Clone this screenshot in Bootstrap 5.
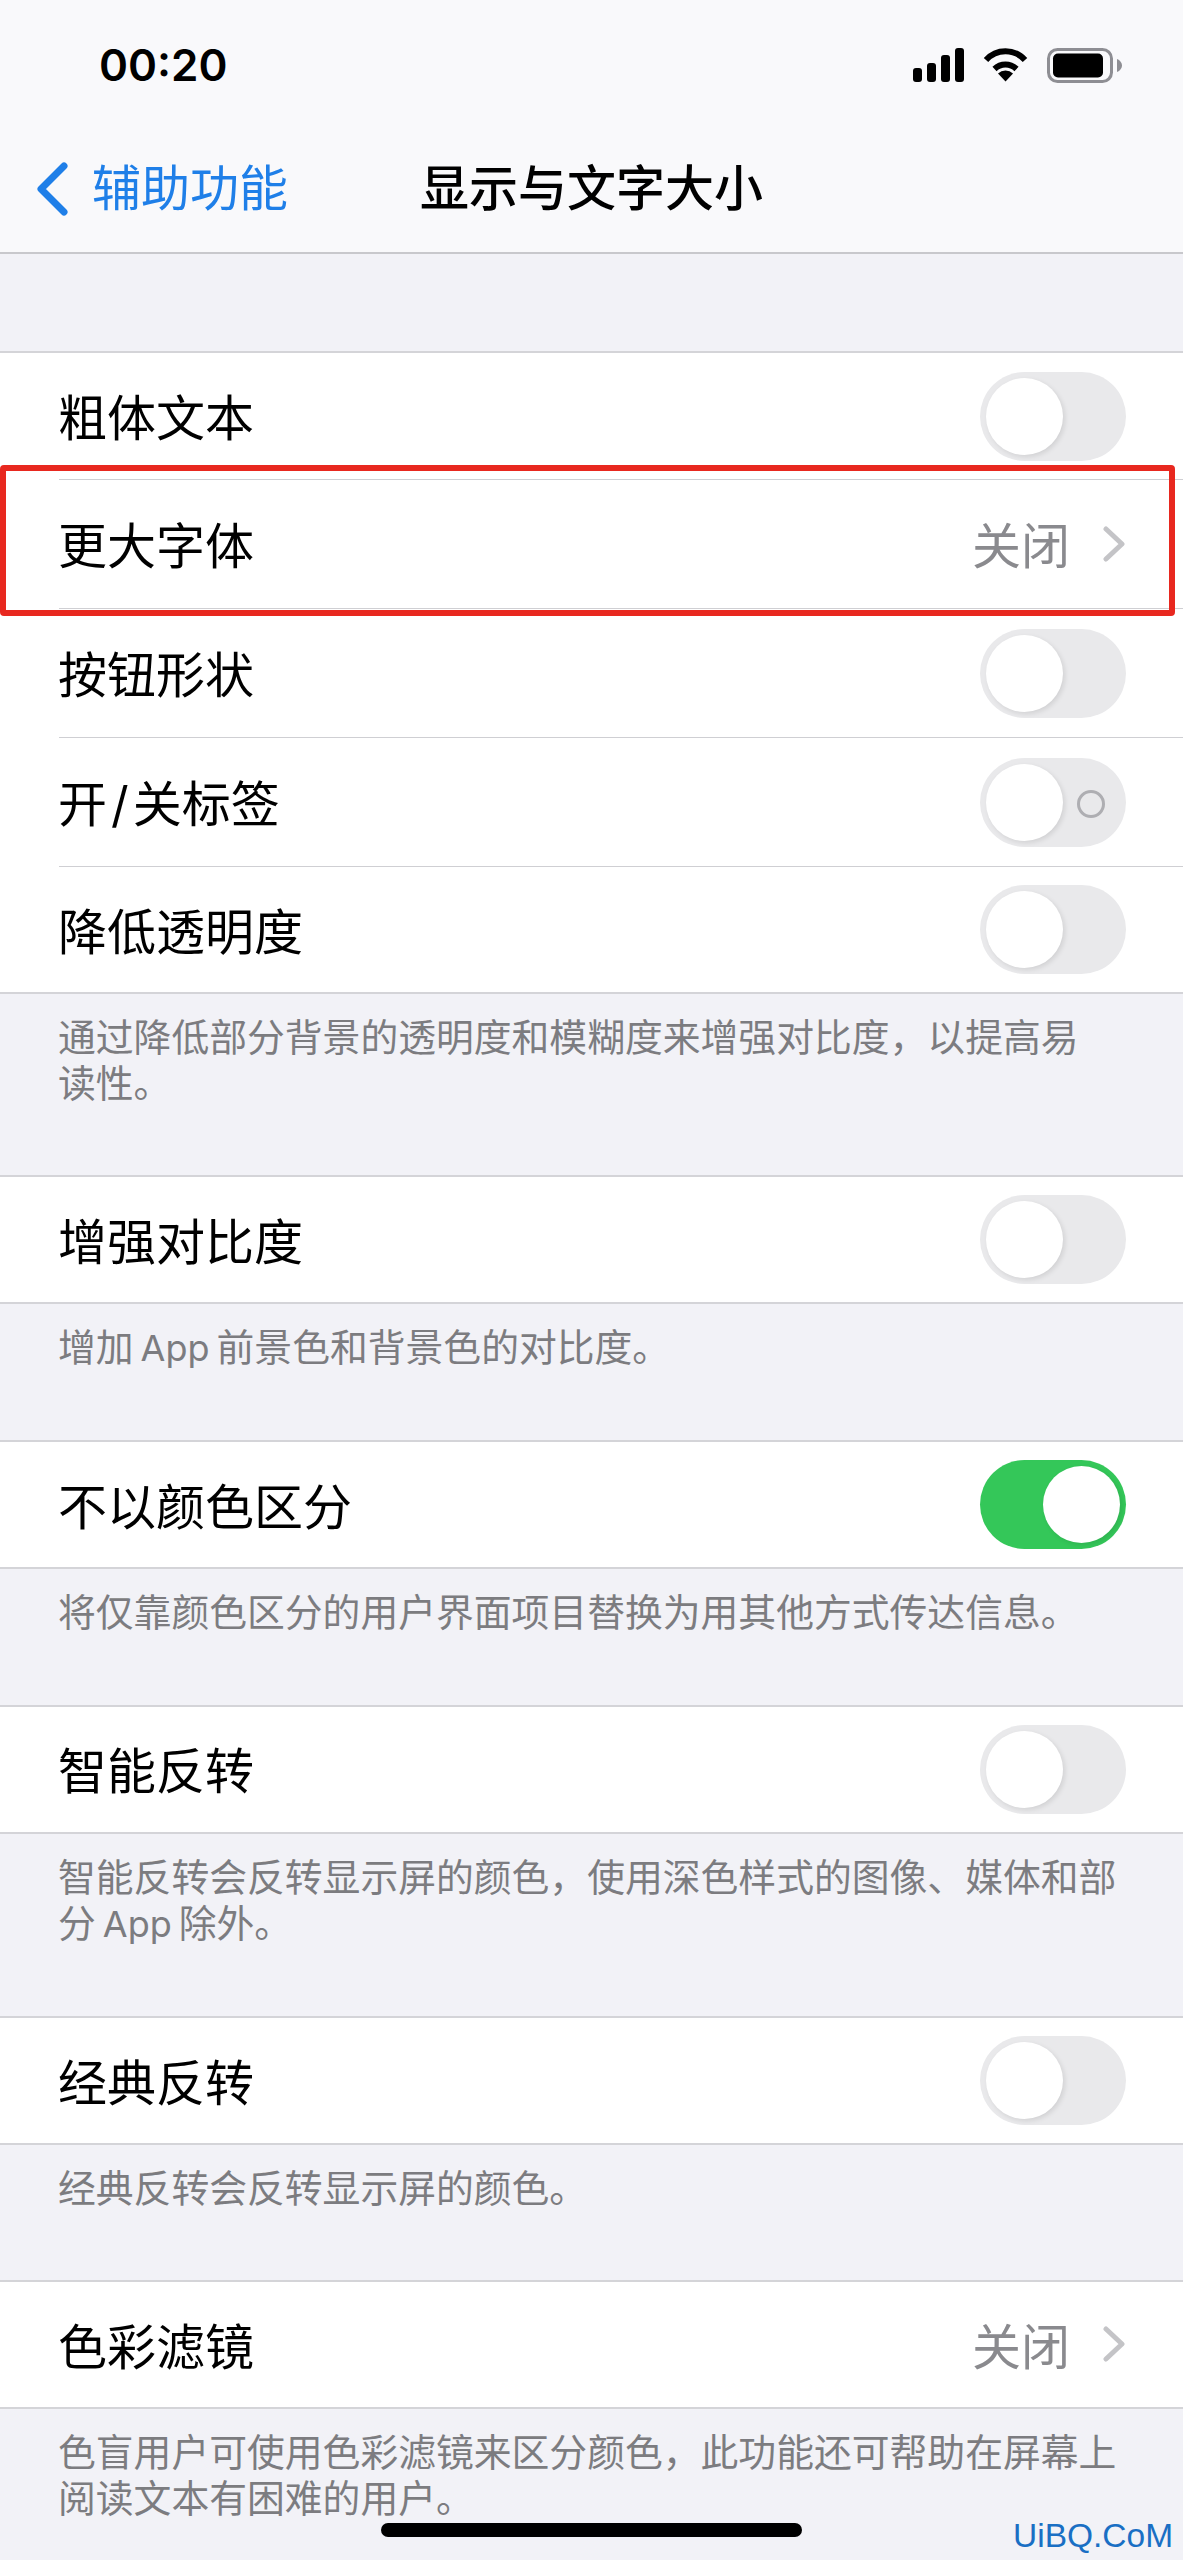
<!DOCTYPE html>
<html lang="zh-CN">
<head>
    <meta charset="UTF-8">
    <meta name="viewport" content="width=device-width, initial-scale=1.0">
    <title>显示与文字大小</title>
    <link href="https://cdn.jsdelivr.net/npm/bootstrap@5.3.2/dist/css/bootstrap.min.css" rel="stylesheet">
    <style>
        html, body { height: 2560px; overflow: hidden; }
        body {
            background-color: #f2f2f7;
            color: #000;
            font-family: "Inter", "Noto Sans CJK SC", sans-serif;
        }
        .screen { height: 2560px; overflow: hidden; }
        .top-head {
            background-color: #f9f9fb;
            border-bottom: 2px solid #c8c8cc;
            height: 254px;
        }
        .status-row { height: 130px; padding: 0 61px 0 99px; }
        .status-time { font-size: 44px; font-weight: 600; line-height: 1; letter-spacing: 0; }
        .status-icons { gap: 19px; }
        .nav-row {
            display: grid;
            grid-template-columns: 1fr auto 1fr;
            height: 118px;
            padding: 0;
            width: 100%;
        }
        .back-link { color: #1f7fe8; font-size: 49px; gap: 24px; margin-left: 36px; text-decoration: none; }
        .nav-title { font-size: 49px; font-weight: 500; }
        .cell-group {
            background-color: #fff;
            border-top: 2px solid #d4d4d8;
            border-bottom: 2px solid #d4d4d8;
            border-radius: 0;
        }
        .cell-row {
            background: transparent;
            border: 0;
            border-bottom: 2px solid #cfcfd3;
            color: #000;
            font-size: 49px;
            height: 129px;
            margin-left: 59px;
            padding: 0 57px 0 0;
        }
        .cell-row > span:first-child { margin-left: -1px; margin-top: 6px; }
        .cell-group .cell-row:first-child:not(:last-child) { height: 127px; }
        .cell-group .cell-row:last-child { border-bottom: 0; height: 125px; }
        .cell-value { color: #8a8a8e; gap: 33px; padding-right: 1px; }
        .cell-value > span { margin-top: 6px; }
        .slash-mark { margin: 0 4px; }
        .switch-off, .switch-on {
            border-radius: 45px;
            height: 89px;
            width: 146px;
        }
        .switch-off { background-color: #e9e9eb; }
        .switch-on { background-color: #34c759; }
        .switch-knob {
            background-color: #fff;
            border-radius: 50%;
            box-shadow: 2px 2px 5px rgba(0, 0, 0, .10);
            height: 77px;
            left: 6px;
            top: 6px;
            width: 77px;
        }
        .switch-on .switch-knob { left: 63px; }
        .switch-ring {
            border: 3px solid #aeaeb2;
            border-radius: 50%;
            height: 28px;
            left: 97px;
            top: 32px;
            width: 28px;
        }
        .cell-note {
            color: #7c7c80;
            font-size: 37.8px;
            line-height: 46px;
            padding: 20px 40px 69.2px 58px;
        }
        .latin-word { font-size: 36px; margin: 0 7px; }
        .first-gap { height: 97px; }
        .red-frame {
            border: 6px solid #e8281f;
            border-radius: 4px;
            bottom: -8px;
            left: -59px;
            right: 8px;
            top: -15px;
        }
        .home-bar {
            background-color: #000;
            border-radius: 7px;
            height: 14px;
            left: 381px;
            top: 2523px;
            width: 421px;
        }
        .site-mark {
            color: #1a6fc4;
            font-family: "Liberation Sans", sans-serif;
            font-size: 33.5px;
            left: 1013px;
            line-height: 1;
            top: 2519px;
        }
    </style>
</head>
<body>
    <div class="screen position-relative">
        <header class="top-head">
            <div class="status-row d-flex justify-content-between align-items-center">
                <span class="status-time">00:20</span>
                <div class="status-icons d-flex align-items-center">
                    <svg width="51" height="34" viewBox="0 0 51 34">
                        <rect x="0" y="20" width="9" height="14" rx="3"/>
                        <rect x="14" y="15" width="9" height="19" rx="3"/>
                        <rect x="28" y="7" width="9" height="27" rx="3"/>
                        <rect x="42" y="0" width="9" height="34" rx="3"/>
                    </svg>
                    <svg width="45" height="34" viewBox="0 0 45 34">
                        <path d="M3 12A26 26 0 0 1 42 12" fill="none" stroke="#000" stroke-width="6"/>
                        <path d="M11.5 21A16 16 0 0 1 33.5 21" fill="none" stroke="#000" stroke-width="6"/>
                        <path d="M22.5 33.5L15 25.5A11 11 0 0 1 30 25.5Z"/>
                    </svg>
                    <svg width="75" height="35" viewBox="0 0 75 35">
                        <rect x="1.5" y="1.5" width="63" height="32" rx="9" fill="none" stroke="#8e8e93" stroke-width="3"/>
                        <rect x="6" y="5.5" width="50" height="24" rx="5"/>
                        <path d="M70 11C73 12 75 15 75 17.500C75 20 73 23 70 24Z" fill="#8e8e93"/>
                    </svg>
                </div>
            </div>
            <nav class="navbar nav-row align-items-center">
                <a class="back-link d-flex align-items-center" href="#">
                    <svg width="32" height="54" viewBox="0 0 32 54">
                        <path d="M28 4L5 27L28 50" fill="none" stroke="#1f7fe8" stroke-width="7" stroke-linecap="round" stroke-linejoin="round"/>
                    </svg>
                    <span>辅助功能</span>
                </a>
                <div class="nav-title">显示与文字大小</div>
                <div></div>
            </nav>
        </header>

        <div class="first-gap"></div>

        <ul class="list-group list-group-flush cell-group">
            <li class="list-group-item cell-row d-flex justify-content-between align-items-center">
                <span>粗体文本</span>
                <span class="switch-off position-relative d-block"><span class="switch-knob position-absolute"></span></span>
            </li>
            <li class="list-group-item cell-row d-flex justify-content-between align-items-center position-relative">
                <span>更大字体</span>
                <span class="cell-value d-flex align-items-center">
                    <span>关闭</span>
                    <svg width="22" height="36" viewBox="0 0 22 36"><path d="M3 3L19 18L3 33" fill="none" stroke="#c4c4c7" stroke-width="5" stroke-linecap="round" stroke-linejoin="round"/></svg>
                </span>
                <span class="red-frame position-absolute"></span>
            </li>
            <li class="list-group-item cell-row d-flex justify-content-between align-items-center">
                <span>按钮形状</span>
                <span class="switch-off position-relative d-block"><span class="switch-knob position-absolute"></span></span>
            </li>
            <li class="list-group-item cell-row d-flex justify-content-between align-items-center">
                <span>开<span class="slash-mark">/</span>关标签</span>
                <span class="switch-off position-relative d-block"><span class="switch-knob position-absolute"></span><span class="switch-ring position-absolute"></span></span>
            </li>
            <li class="list-group-item cell-row d-flex justify-content-between align-items-center">
                <span>降低透明度</span>
                <span class="switch-off position-relative d-block"><span class="switch-knob position-absolute"></span></span>
            </li>
        </ul>
        <p class="cell-note m-0">通过降低部分背景的透明度和模糊度来增强对比度，以提高易<br>读性。</p>

        <ul class="list-group list-group-flush cell-group">
            <li class="list-group-item cell-row d-flex justify-content-between align-items-center">
                <span>增强对比度</span>
                <span class="switch-off position-relative d-block"><span class="switch-knob position-absolute"></span></span>
            </li>
        </ul>
        <p class="cell-note m-0">增加<span class="latin-word">App</span>前景色和背景色的对比度。</p>

        <ul class="list-group list-group-flush cell-group">
            <li class="list-group-item cell-row d-flex justify-content-between align-items-center">
                <span>不以颜色区分</span>
                <span class="switch-on position-relative d-block"><span class="switch-knob position-absolute"></span></span>
            </li>
        </ul>
        <p class="cell-note m-0">将仅靠颜色区分的用户界面项目替换为用其他方式传达信息。</p>

        <ul class="list-group list-group-flush cell-group">
            <li class="list-group-item cell-row d-flex justify-content-between align-items-center">
                <span>智能反转</span>
                <span class="switch-off position-relative d-block"><span class="switch-knob position-absolute"></span></span>
            </li>
        </ul>
        <p class="cell-note m-0">智能反转会反转显示屏的颜色，使用深色样式的图像、媒体和部<br>分<span class="latin-word">App</span>除外。</p>

        <ul class="list-group list-group-flush cell-group">
            <li class="list-group-item cell-row d-flex justify-content-between align-items-center">
                <span>经典反转</span>
                <span class="switch-off position-relative d-block"><span class="switch-knob position-absolute"></span></span>
            </li>
        </ul>
        <p class="cell-note m-0">经典反转会反转显示屏的颜色。</p>

        <ul class="list-group list-group-flush cell-group">
            <li class="list-group-item cell-row d-flex justify-content-between align-items-center">
                <span>色彩滤镜</span>
                <span class="cell-value d-flex align-items-center">
                    <span>关闭</span>
                    <svg width="22" height="36" viewBox="0 0 22 36"><path d="M3 3L19 18L3 33" fill="none" stroke="#c4c4c7" stroke-width="5" stroke-linecap="round" stroke-linejoin="round"/></svg>
                </span>
            </li>
        </ul>
        <p class="cell-note m-0">色盲用户可使用色彩滤镜来区分颜色，此功能还可帮助在屏幕上<br>阅读文本有困难的用户。</p>

        <div class="home-bar position-absolute"></div>
        <div class="site-mark position-absolute">UiBQ.CoM</div>
    </div>
    <script src="https://cdn.jsdelivr.net/npm/bootstrap@5.3.2/dist/js/bootstrap.bundle.min.js"></script>
</body>
</html>
